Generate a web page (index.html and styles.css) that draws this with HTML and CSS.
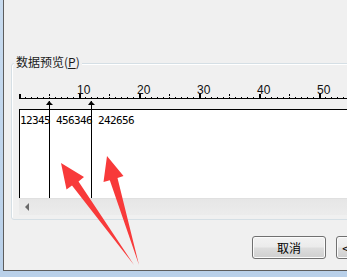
FILE: index.html
```html
<!DOCTYPE html>
<html lang="zh-CN">
<head>
    <meta charset="UTF-8">
    <title>文本导入向导</title>
    <link rel="stylesheet" href="styles.css">
</head>
<body>
    <div class="frame">
        <div class="client">
            <div class="group">
                <span class="group-title">数据预览(<u>P</u>)</span>
                <div class="preview">
                    <!-- 标尺 -->
                    <svg class="ruler" width="340" height="29" viewBox="0 0 340 29">
                        <defs>
                            <pattern id="dots" patternUnits="userSpaceOnUse" width="6" height="1">
                                <rect x="0" y="0" width="1" height="1" fill="#000"/>
                            </pattern>
                            <pattern id="ticks" patternUnits="userSpaceOnUse" width="60" height="4">
                                <rect x="0" y="0" width="2" height="4" fill="#000"/>
                                <rect x="30" y="1" width="1" height="3" fill="#000"/>
                            </pattern>
                        </defs>
                        <rect x="0" y="14" width="340" height="4" fill="url(#ticks)"/>
                        <rect x="0" y="17" width="340" height="1" fill="url(#dots)"/>
                        <rect x="0" y="18" width="340" height="1" fill="#000"/>
                        <g class="ruler-labels">
                            <text x="58" y="14">10</text>
                            <text x="118" y="14">20</text>
                            <text x="178" y="14">30</text>
                            <text x="238" y="14">40</text>
                            <text x="298" y="14">50</text>
                        </g>
                    </svg>
                    <div class="textview">12345 456346 242656</div>
                    <div class="hscroll"><span class="scroll-left"></span></div>
                    <!-- 分列线 -->
                    <div class="marker" style="left: 30px"></div>
                    <div class="marker" style="left: 72px"></div>
                </div>
            </div>
            <div class="buttons">
                <button class="btn">取消</button>
                <button class="btn">&lt; 上一步(<u>B</u>)</button>
            </div>
        </div>

        <!-- 红色标注箭头 -->
        <svg class="annotation" width="347" height="277" viewBox="0 0 347 277">
            <polygon points="61,163 84,177 78.5,181.5 134,265 72,185.5 66.5,189.5" fill="#f83a3a"/>
            <polygon points="107,156 123.5,176 117.5,178 139,265 109.8,180.2 103.5,182" fill="#f83a3a"/>
        </svg>
    </div>
</body>
</html>
```

FILE: styles.css
```css
body {
    margin: 0;
    font-family: "Noto Sans CJK SC", sans-serif;
}

/* 窗口边框 */
.frame {
    position: relative;
    width: 347px;
    height: 277px;
    box-sizing: border-box;
    padding: 0 0 6px 3px;
    background: linear-gradient(to bottom, #c8dbef, #b9d0e9);
    overflow: hidden;
}

.client {
    height: 100%;
    box-sizing: border-box;
    padding-top: 63px;
    background: #f0f0f0;
    border-left: 1px solid #5d5d5d;
    border-bottom: 1px solid #5d5d5d;
    overflow: hidden;
}

/* 分组框 */
.group {
    position: relative;
    height: 157px;
    box-sizing: border-box;
    margin: 0 -10px 0 7px;
    padding: 16px 0 0 7px;
    border: 1px solid #d5dfe5;
    border-radius: 3px;
    box-shadow: inset 1px 1px 0 #fff;
}

.group-title {
    position: absolute;
    top: -10px;
    left: 2px;
    padding: 0 2px;
    background: #f0f0f0;
    font-size: 12px;
    line-height: 16px;
    color: #1a1a1a;
}

.preview {
    position: relative;
}

.ruler {
    display: block;
}

.ruler-labels {
    font-family: "Liberation Sans", Arial, sans-serif;
    font-size: 12px;
    fill: #111;
}

.textview {
    height: 88px;
    padding-top: 4px;
    box-sizing: border-box;
    height: 89px;
    background: #fff;
    border-top: 1px solid #000;
    border-left: 1px solid #000;
    font-family: "DejaVu Sans Mono", monospace;
    font-size: 11px;
    line-height: 13px;
    letter-spacing: -0.62px;
    white-space: pre;
    color: #000;
}

.hscroll {
    display: flex;
    align-items: center;
    height: 17px;
    padding-left: 6px;
    background: linear-gradient(to bottom, #e6e6e6, #ececec);
    border-top: 1px solid #e0e0e0;
    box-sizing: border-box;
}

.scroll-left {
    width: 0;
    height: 0;
    border-top: 4px solid transparent;
    border-bottom: 4px solid transparent;
    border-right: 4px solid #6a6a6a;
}

/* 分列线带箭头 */
.marker {
    position: absolute;
    top: 21px;
    bottom: 17px;
    width: 1px;
    background: #000;
}

.marker::before {
    content: '';
    position: absolute;
    top: 0;
    left: -3px;
    width: 0;
    height: 0;
    border-left: 3px solid transparent;
    border-right: 4px solid transparent;
    border-bottom: 4px solid #000;
}

.buttons {
    display: flex;
    gap: 10px;
    margin: 16px 0 0 248px;
}

.btn {
    flex: none;
    width: 74px;
    height: 23px;
    padding: 0;
    border: 1px solid #707070;
    border-radius: 3px;
    background: linear-gradient(to bottom, #f2f2f2 0%, #ebebeb 48%, #dddddd 52%, #cfcfcf 100%);
    box-shadow: inset 0 0 0 1px #fbfbfb;
    font-family: "Noto Sans CJK SC", sans-serif;
    font-size: 12px;
    color: #000;
    white-space: nowrap;
}

.annotation {
    position: absolute;
    top: 0;
    left: 0;
    pointer-events: none;
}
```
